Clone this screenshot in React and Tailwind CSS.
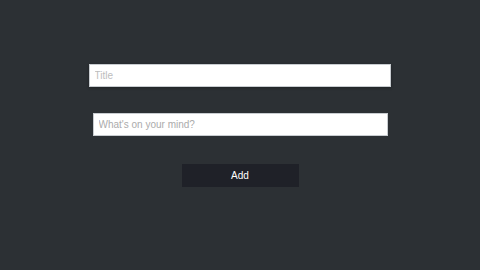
export default function App() {
  return (
    <div
      className="w-full h-[270px] bg-[#2c3034] pt-[64px]"
      style={{ fontFamily: '"Liberation Sans", Arial, sans-serif' }}
    >
      <form className="flex flex-col items-center" onSubmit={(e) => e.preventDefault()}>
        <input
          type="text"
          placeholder="Title"
          className="ml-[-1px] w-[302px] h-[23px] bg-white border border-[#c8ccd0] px-[5px] text-[10px] text-gray-800 placeholder:text-[#bdbdbd] outline-none shadow-[0_1px_3px_rgba(0,0,0,0.3)]"
        />
        <input
          type="text"
          placeholder="What's on your mind?"
          className="mt-[26px] w-[295px] h-[23px] bg-white border border-[#c8ccd0] px-[5px] text-[10px] text-gray-800 placeholder:text-[#ababab] outline-none"
        />
        <button
          type="submit"
          className="mt-[28px] w-[117px] h-[23px] bg-[#1f2128] text-white text-[10px]"
        >
          Add
        </button>
      </form>
    </div>
  );
}
